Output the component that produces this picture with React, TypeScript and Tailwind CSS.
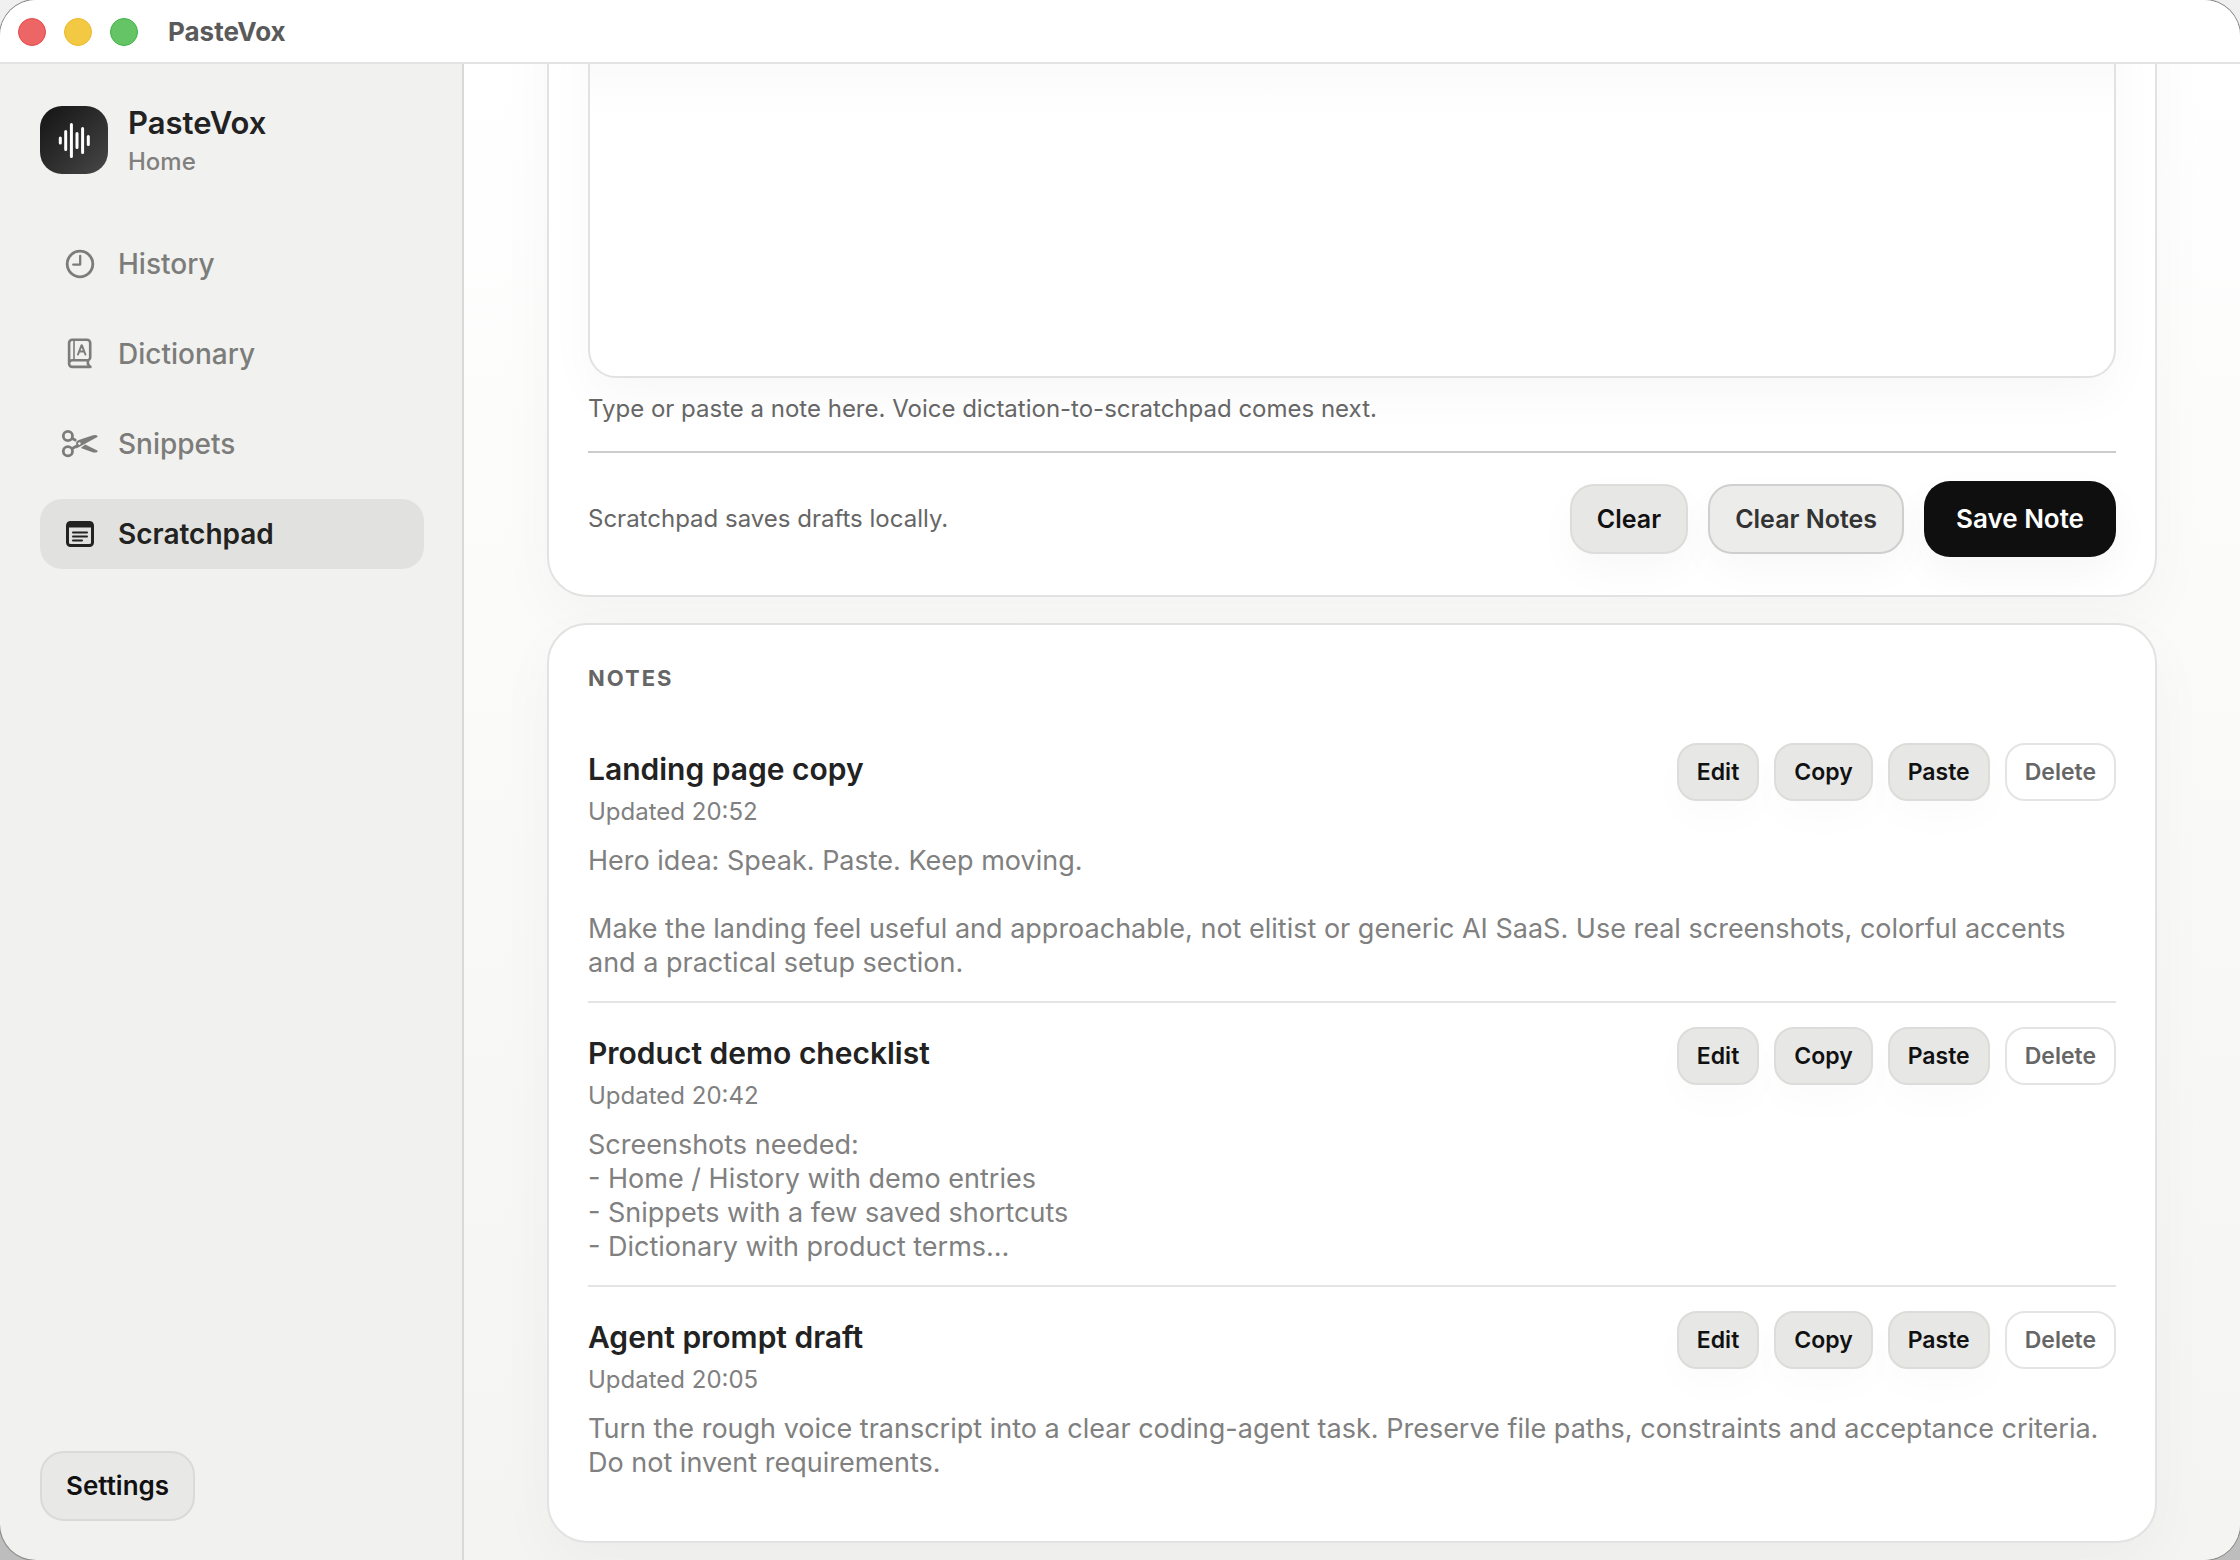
import React from "react";

type Note = { title: string; updated: string; body: string };

const notes: Note[] = [
  {
    title: "Landing page copy",
    updated: "Updated 20:52",
    body: "Hero idea: Speak. Paste. Keep moving.\n\nMake the landing feel useful and approachable, not elitist or generic AI SaaS. Use real screenshots, colorful accents and a practical setup section.",
  },
  {
    title: "Product demo checklist",
    updated: "Updated 20:42",
    body: "Screenshots needed:\n- Home / History with demo entries\n- Snippets with a few saved shortcuts\n- Dictionary with product terms…",
  },
  {
    title: "Agent prompt draft",
    updated: "Updated 20:05",
    body: "Turn the rough voice transcript into a clear coding-agent task. Preserve file paths, constraints and acceptance criteria. Do not invent requirements.",
  },
];

function LogoIcon() {
  return (
    <svg viewBox="0 0 68 68" className="size-full" fill="none" stroke="#fff" strokeWidth="3" strokeLinecap="round" aria-hidden="true">
      <path d="M20.300 32v5M25.700 25.400v18M31.400 18.600v32M37 27.400v14M42.600 22.400v24M48.300 30.400v8" />
    </svg>
  );
}

function ClockIcon() {
  return (
    <svg viewBox="0 0 40 40" className="size-10" fill="none" stroke="currentColor" strokeWidth="2.800" strokeLinecap="round" strokeLinejoin="round" aria-hidden="true">
      <circle cx="20" cy="20" r="12.800" />
      <path d="M20.200 12v8.600h-7" strokeWidth="2.300" />
    </svg>
  );
}

function DictionaryIcon() {
  return (
    <svg viewBox="0 0 40 40" className="size-10" fill="none" stroke="currentColor" strokeWidth="2.600" strokeLinecap="round" strokeLinejoin="round" aria-hidden="true">
      <path d="M30.400 32.900H12.300A3.200 3.200 0 0 1 9.100 29.700V8.900a3.200 3.200 0 0 1 3.200-3.200H27a3.200 3.200 0 0 1 3.200 3.200v14.400a3 3 0 0 1-3 3H12.300a3.200 3.200 0 0 0-3.200 3.200M27.900 26.500v3.500l2.200 2.700" />
      <path d="M14 6v20" strokeWidth="1.600" />
      <path d="m18 20.500 3.600-9.300h.2l3.600 9.300M19.200 17.600h5" strokeWidth="2" />
    </svg>
  );
}

function ScissorsIcon() {
  return (
    <svg viewBox="0 0 40 40" className="size-10" fill="none" stroke="currentColor" strokeWidth="2.800" strokeLinecap="round" strokeLinejoin="round" aria-hidden="true">
      <circle cx="7.900" cy="12" r="4.600" />
      <circle cx="7.900" cy="27.300" r="4.600" />
      <path d="m12.200 14.600 3 1.500M12.200 24.600l5.500-3" strokeWidth="2.800" />
      <path d="M16.200 18.600c.4-1.300 1.200-2 2.600-2.500L31.500 11.700c2.800-.9 5-.9 6 .2.300.4.200.8-.2 1.100L21 22l-4.800 2.500z" fill="currentColor" stroke="none" />
      <path d="M25.200 20.400 37.300 26.600c.5.300.5.700.1 1.100-1 1.100-3.200 1.200-5.500.4L20.800 24z" fill="currentColor" stroke="none" />
      <circle cx="19.400" cy="19.600" r="1.300" fill="#f1f1ef" stroke="none" />
    </svg>
  );
}

function ScratchpadIcon() {
  return (
    <svg viewBox="0 0 40 40" className="size-10" fill="none" stroke="currentColor" aria-hidden="true">
      <rect x="7.500" y="8.500" width="25" height="23" rx="3" strokeWidth="3" />
      <path d="M7 8.500h26v5H7z" fill="currentColor" stroke="none" />
      <path d="M13 18.600h14M13 22.600h14M13 26.600h9" strokeWidth="2" strokeLinecap="round" />
    </svg>
  );
}

const nav = [
  { label: "History", Icon: ClockIcon, active: false },
  { label: "Dictionary", Icon: DictionaryIcon, active: false },
  { label: "Snippets", Icon: ScissorsIcon, active: false },
  { label: "Scratchpad", Icon: ScratchpadIcon, active: true },
];

const smallButton =
  "h-[58px] rounded-[20px] border-2 px-[18px] text-[23px] leading-7 font-semibold";
const smallSolid =
  smallButton + " border-[#dcdcda] bg-[#e7e7e5] text-[#111111] shadow-[0_16px_40px_rgba(0,0,0,0.02)]";

function NoteRow({ note, last }: { note: Note; last: boolean }) {
  return (
    <li className={last ? "pt-6 pb-[23px]" : "border-b-2 border-[#e4e4e4] pt-6 pb-[21px]"}>
      <div className="flex items-start justify-between">
        <div className="pt-2">
          <h3 className="text-[30px] leading-9 font-semibold text-[#222222]">{note.title}</h3>
          <p className="mt-[9px] text-[24px] leading-8 text-[#808080]">{note.updated}</p>
        </div>
        <div className="flex gap-[15px]">
          <button type="button" className={smallSolid}>Edit</button>
          <button type="button" className={smallSolid}>Copy</button>
          <button type="button" className={smallSolid}>Paste</button>
          <button type="button" className={smallButton + " border-[#e4e4e4] bg-white text-[#666666]"}>
            Delete
          </button>
        </div>
      </div>
      <p className="mt-4 text-[27px] leading-[34px] whitespace-pre-line text-[#808080]">{note.body}</p>
    </li>
  );
}

export default function App() {
  return (
    <div className="h-screen bg-linear-to-b from-[#f0f0f0] to-[#bdbdbd] font-['Inter','Liberation_Sans',sans-serif]">
      <div className="flex h-full flex-col overflow-hidden rounded-[36px] bg-[#f1f1ef] shadow-[0_0_0_1px_#8a8a8a]">
        <header className="flex h-16 shrink-0 items-center border-b-2 border-[#e3e3e3] bg-white pt-0.5 pl-[18px]">
          <div className="flex gap-[18px]">
            <button type="button" aria-label="Close" className="size-7 rounded-full border border-[#e14a4a] bg-[#ed6665]" />
            <button type="button" aria-label="Minimize" className="size-7 rounded-full border border-[#e8b92a] bg-[#f3c843]" />
            <button type="button" aria-label="Zoom" className="size-7 rounded-full border border-[#3fb344] bg-[#65c466]" />
          </div>
          <h1 className="ml-[30px] text-[26px] leading-8 font-bold text-[#5a5a5a]">PasteVox</h1>
        </header>

        <div className="flex min-h-0 flex-1">
          <aside className="flex w-[464px] shrink-0 flex-col border-r-2 border-[#d9d9d8] pt-[42px] pr-[38px] pb-[39px] pl-10">
            <div className="flex gap-5">
              <div className="size-[68px] rounded-[22px] bg-linear-to-br from-[#141414] to-[#484848]">
                <LogoIcon />
              </div>
              <div>
                <p className="text-[31px] leading-[34px] font-semibold text-[#222222]">PasteVox</p>
                <p className="mt-1.5 text-[24px] leading-8 font-medium text-[#80807e]">Home</p>
              </div>
            </div>
            <nav className="mt-[51px] flex flex-col gap-5">
              {nav.map(({ label, Icon, active }) => (
                <a
                  key={label}
                  href={"#" + label.toLowerCase()}
                  aria-current={active ? "page" : undefined}
                  className={
                    active
                      ? "flex h-[70px] items-center gap-[18px] rounded-[22px] bg-[#e1e1df] px-5 text-[28px] leading-9 font-semibold text-[#222220]"
                      : "flex h-[70px] items-center gap-[18px] rounded-[22px] px-5 text-[28px] leading-9 font-medium text-[#7c7c7a]"
                  }
                >
                  <Icon />
                  {label}
                </a>
              ))}
            </nav>
            <button
              type="button"
              className="mt-auto h-[70px] self-start rounded-[24px] border-2 border-[#dadad8] bg-[#e8e8e6] px-6 text-[26px] leading-8 font-semibold text-[#111111]"
            >
              Settings
            </button>
          </aside>

          <main className="flex min-w-0 flex-1 flex-col justify-end gap-[26px] overflow-hidden bg-linear-to-b from-white to-[#f4f4f2] px-[83px] pb-[17px]">
            <section className="shrink-0 rounded-[40px] border-2 border-[#e2e2e2] bg-white p-[39px] pb-[38px] shadow-[0_20px_60px_rgba(0,0,0,0.035)]">
              <textarea
                aria-label="Scratchpad note"
                className="block h-[380px] w-full resize-none rounded-[28px] border-2 border-[#e2e2e2] bg-white bg-linear-to-b from-[#f4f4f4] to-white to-30% p-6 text-[27px] leading-[34px] text-[#222222] shadow-[0_20px_48px_rgba(0,0,0,0.03)] outline-none"
              />
              <p className="mt-[15px] text-[24px] leading-8 text-[#666666]">
                Type or paste a note here. Voice dictation-to-scratchpad comes next.
              </p>
              <div className="mt-[26px] flex items-center gap-5 border-t-2 border-[#cccccc] pt-7">
                <p className="flex-1 text-[24px] leading-8 text-[#666666]">Scratchpad saves drafts locally.</p>
                <button
                  type="button"
                  className="h-[70px] rounded-[24px] border-2 border-[#dcdcda] bg-[#e7e7e5] px-[25px] text-[25px] leading-8 font-semibold text-[#111111] shadow-[0_16px_40px_rgba(0,0,0,0.03)]"
                >
                  Clear
                </button>
                <button
                  type="button"
                  className="h-[70px] rounded-[24px] border-2 border-[#cfcfcf] bg-[#ececeb] px-[25px] text-[25px] leading-8 font-semibold text-[#333333] shadow-[0_16px_40px_rgba(0,0,0,0.03)]"
                >
                  Clear Notes
                </button>
                <button
                  type="button"
                  className="h-[76px] rounded-[26px] bg-[#0f0f0f] px-8 text-[26px] leading-8 font-semibold text-white shadow-[0_16px_40px_rgba(0,0,0,0.04)]"
                >
                  Save Note
                </button>
              </div>
            </section>

            <section className="shrink-0 rounded-[40px] border-2 border-[#e2e2e2] bg-white p-[39px] pt-[38px] pb-[38px] shadow-[0_20px_60px_rgba(0,0,0,0.035)]">
              <h2 className="text-[22px] leading-[30px] font-bold tracking-[2px] text-[#666666]">NOTES</h2>
              <ul className="mt-[26px]">
                {notes.map((note, i) => (
                  <NoteRow key={note.title} note={note} last={i === notes.length - 1} />
                ))}
              </ul>
            </section>
          </main>
        </div>
      </div>
    </div>
  );
}
